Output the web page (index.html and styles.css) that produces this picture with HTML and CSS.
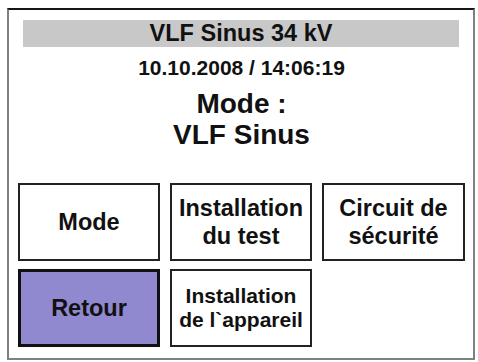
FILE: index.html
```html
<!DOCTYPE html>
<html lang="fr">
<head>
<meta charset="utf-8">
<title>VLF Sinus 34 kV</title>
<link rel="stylesheet" href="styles.css">
</head>
<body>
<div class="frame">
  <div class="titlebar">VLF Sinus 34 kV</div>
  <div class="date">10.10.2008 / 14:06:19</div>
  <div class="mode">Mode :<br>VLF Sinus</div>
  <div class="grid">
    <div class="btn">Mode</div>
    <div class="btn">Installation<br>du test</div>
    <div class="btn">Circuit de<br>sécurité</div>
    <div class="btn active">Retour</div>
    <div class="btn small">Installation<br>de l`appareil</div>
  </div>
</div>
</body>
</html>
```
FILE: styles.css
```css
html, body {
  margin: 0;
  padding: 0;
  background: #ffffff;
}
body {
  font-family: "Liberation Sans", Arial, sans-serif;
  font-weight: bold;
  color: #111;
}
.frame {
  box-sizing: border-box;
  width: 468px;
  height: 352px;
  margin: 8px 0 0 7px;
  border: 2px solid #808080;
  border-top-color: #151515;
  padding: 10px 8px 0 9px;
}
.titlebar {
  height: 27px;
  margin: 0 6px 0 5px;
  background: #c8c8c8;
  text-align: center;
  font-size: 23.5px;
  line-height: 27px;
}
.date {
  margin-top: 8px;
  text-align: center;
  font-size: 21px;
  line-height: 26px;
}
.mode {
  margin-top: 7px;
  text-align: center;
  font-size: 28px;
  line-height: 31px;
}
.grid {
  margin-top: 33px;
  display: grid;
  grid-template-columns: 142px 142px 143px;
  grid-auto-rows: 78px;
  column-gap: 10px;
  row-gap: 8px;
}
.btn {
  box-sizing: border-box;
  border: 2px solid #222;
  background: #fff;
  display: flex;
  align-items: center;
  justify-content: center;
  text-align: center;
  font-size: 23.5px;
  line-height: 28px;
}
.btn.active {
  background: #9189d0;
  border: 3px solid #111;
}
.btn.small {
  font-size: 21px;
  line-height: 24px;
}
```
